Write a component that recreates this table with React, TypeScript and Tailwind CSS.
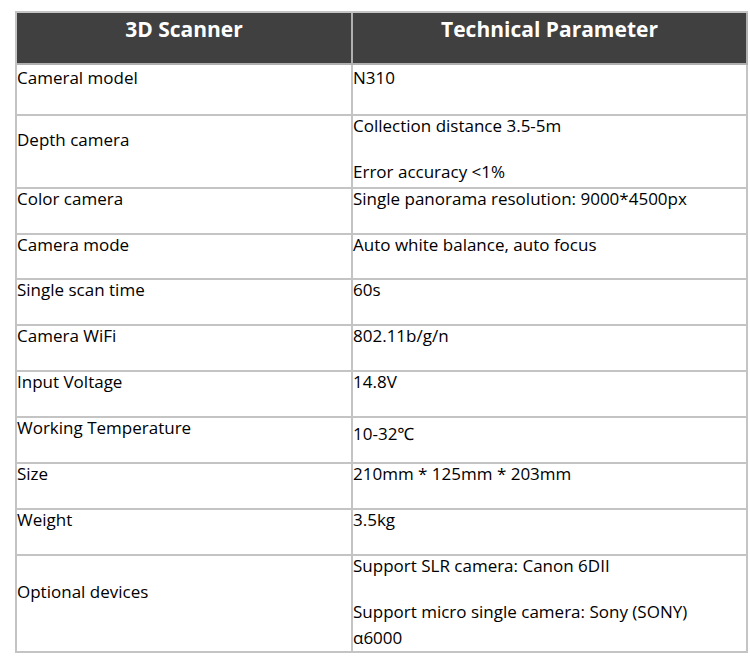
import React from "react";

type Row = { label: string; values: string[]; h: number; leftCenter?: boolean; valueShift?: boolean; first?: boolean };

const rows: Row[] = [
  { label: "Cameral model", values: ["N310"], h: 51, first: true },
  { label: "Depth camera", values: ["Collection distance 3.5-5m", "Error accuracy <1%"], h: 73, leftCenter: true },
  { label: "Color camera", values: ["Single panorama resolution: 9000*4500px"], h: 46 },
  { label: "Camera mode", values: ["Auto white balance, auto focus"], h: 45 },
  { label: "Single scan time", values: ["60s"], h: 46 },
  { label: "Camera WiFi", values: ["802.11b/g/n"], h: 46 },
  { label: "Input Voltage", values: ["14.8V"], h: 46 },
  { label: "Working Temperature", values: ["10-32℃"], h: 46, valueShift: true },
  { label: "Size", values: ["210mm * 125mm * 203mm"], h: 46 },
  { label: "Weight", values: ["3.5kg"], h: 46 },
  {
    label: "Optional devices",
    values: ["Support SLR camera: Canon 6DII", "Support micro single camera: Sony (SONY) α6000"],
    h: 97,
    leftCenter: true,
  },
];

export default function App() {
  return (
    <div
      className="w-[750px] h-[659px] bg-white pt-[11px] pl-[15px]"
      style={{ fontFamily: '"Open Sans", "Noto Sans", sans-serif' }}
    >
      <div className="w-[733px] border-l-2 border-t-2 border-[#c4c4c4]">
        <div className="flex h-[52px] bg-[#404040] text-white font-bold text-[21px] leading-[30px]">
          <div className="w-[336px] border-r-2 border-b-2 border-[#b0b0b0] flex justify-center pt-[1px]">
            3D Scanner
          </div>
          <div className="flex-1 border-r-2 border-b-2 border-[#b0b0b0] flex justify-center pt-[1px]">
            Technical Parameter
          </div>
        </div>
        {rows.map((r, i) => (
          <div key={i} className="flex text-black text-[17px] leading-[26px]" style={{ height: r.h }}>
            <div
              className={
                "w-[336px] border-r-2 border-b-2 border-[#c4c4c4] flex flex-col " +
                (r.leftCenter ? "justify-center pb-[20px]" : "justify-start")
              }
            >
              <div className={r.first ? "mt-0" : "-mt-[3px]"}>{r.label}</div>
            </div>
            <div className="flex-1 border-r-2 border-b-2 border-[#c4c4c4] pr-[48px] flex flex-col">
              {r.values.map((v, j) => (
                <div
                  key={j}
                  className={
                    (j === 0 ? (r.valueShift ? "mt-[3px] " : r.first ? "mt-0 " : "-mt-[3px] ") : "") +
                    (j < r.values.length - 1 ? "mb-[20px]" : "")
                  }
                >
                  {v}
                </div>
              ))}
            </div>
          </div>
        ))}
      </div>
    </div>
  );
}
